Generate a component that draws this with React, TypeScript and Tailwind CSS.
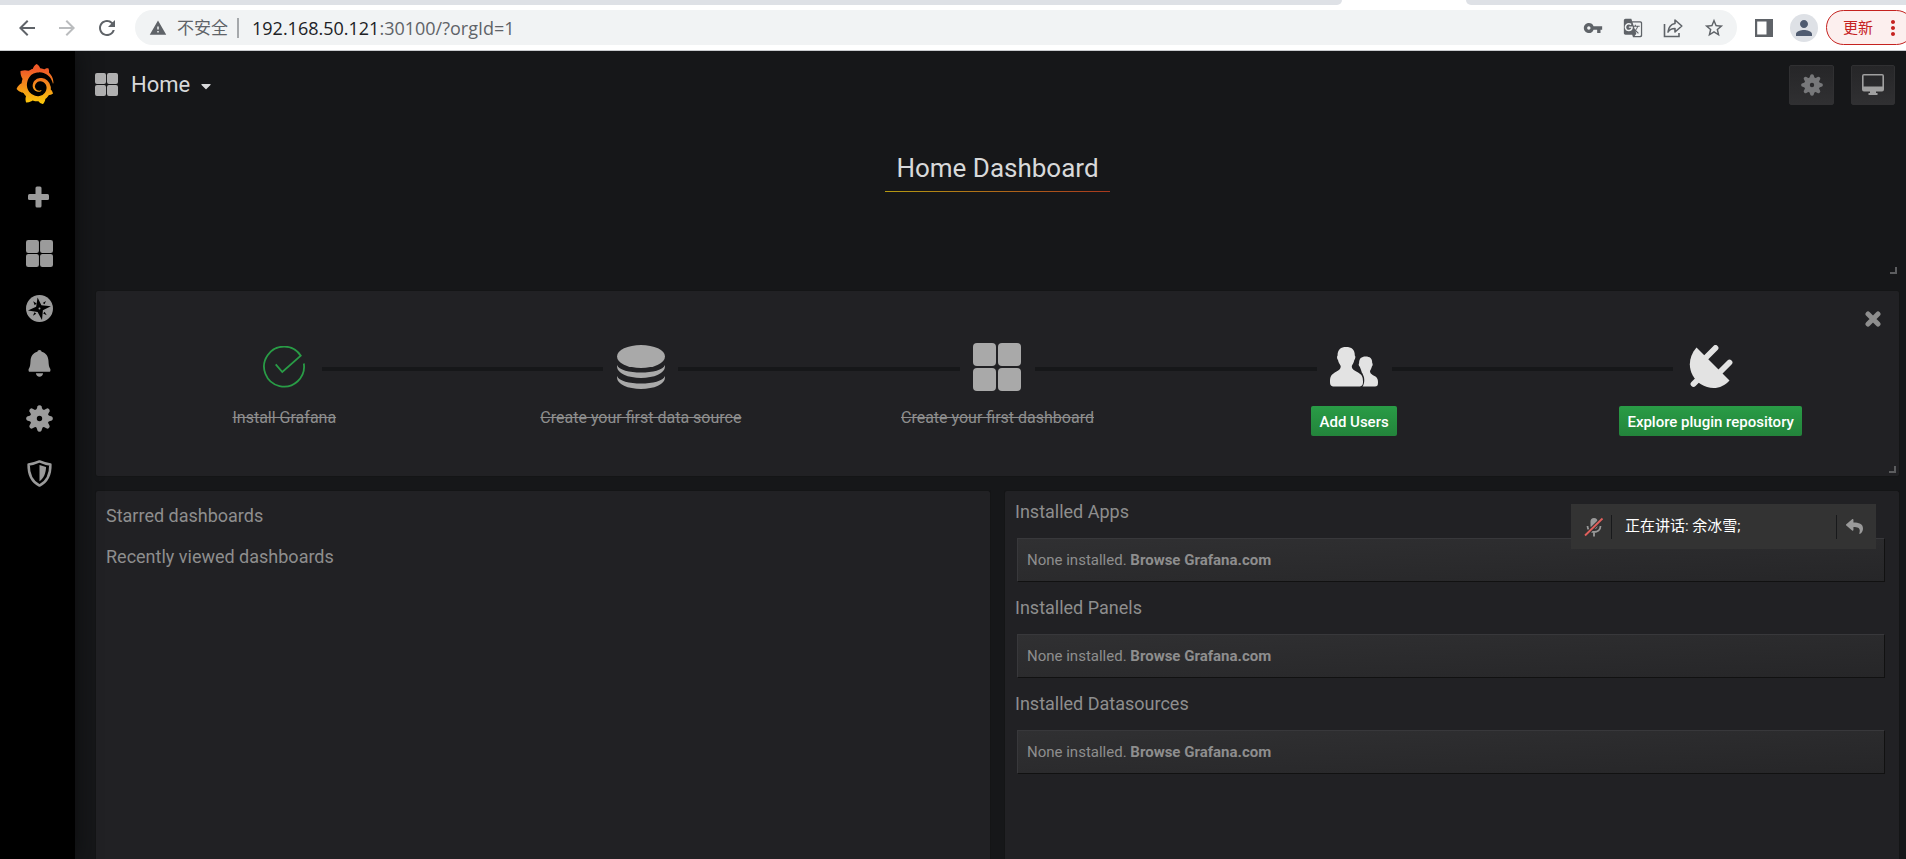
import type { ReactNode } from 'react';
import { SiGrafana } from 'react-icons/si';
import { FaReply, FaCaretDown } from 'react-icons/fa';
import { MdArrowBack, MdArrowForward, MdRefresh, MdWarning, MdVpnKey, MdStarBorder, MdPerson, MdGTranslate, MdMoreVert } from 'react-icons/md';

const PlusIcon = ({ className }: { className: string }) => (
  <svg viewBox="0 0 27 27" className={className} fill="currentColor" aria-hidden="true">
    <rect x="2" y="9" width="21" height="6" rx="1.500" />
    <rect x="9.500" y="1.500" width="6" height="21" rx="1.500" />
  </svg>
);

const GridIcon = ({ className }: { className: string }) => (
  <svg viewBox="0 0 48 48" className={className} fill="currentColor" aria-hidden="true">
    <rect x="0" y="0" width="23" height="23" rx="4" />
    <rect x="25" y="0" width="23" height="23" rx="4" />
    <rect x="0" y="25" width="23" height="23" rx="4" />
    <rect x="25" y="25" width="23" height="23" rx="4" />
  </svg>
);

const GearIcon = ({ className }: { className: string }) => (
  <svg viewBox="0 0 28 28" className={className} aria-hidden="true">
    <g fill="currentColor">
      {[0, 45, 90, 135, 180, 225, 270, 315].map((a) => (
        <path key={a} d="M10.6 5.5 L12 1.2 Q12.4 0.2 14 0.2 Q15.6 0.2 16 1.2 L17.4 5.5 Z" transform={`rotate(${a} 14 14)`} />
      ))}
      <path fillRule="evenodd" d="M14 4a10 10 0 1 0 0 20a10 10 0 1 0 0-20ZM14 11.2a2.8 2.8 0 1 1 0 5.6a2.8 2.8 0 1 1 0-5.6Z" />
    </g>
  </svg>
);

const CompassIcon = ({ className }: { className: string }) => (
  <svg viewBox="0 0 28 28" className={className} aria-hidden="true">
    <circle cx="14" cy="14" r="14" fill="currentColor" />
    <g fill="#000">
      <path d="M12 2.5 L16 10.6 L25.8 11.7 L17.500 15.900 L16.6 25.800 L12 17.500 L2 16.2 L10.500 12.100 Z" />
      <path d="M7.5 6.5 L11 8.7 L9 10.7 Z M20.7 6.2 L19.2 9.7 L17.4 8.2 Z M21.5 21 L17.8 19.2 L19.3 17.3 Z M7.2 21.5 L8.8 17.8 L10.6 19.4 Z" />
    </g>
    <circle cx="14" cy="14" r="1" fill="currentColor" />
  </svg>
);

const BellIcon = ({ className }: { className: string }) => (
  <svg viewBox="0 0 28 28" className={className} fill="currentColor" aria-hidden="true">
    <path d="M14 0c1.3 0 2 .8 2.2 1.9 4.600 1.200 6.900 5 7.100 9.300.2 4 .5 6.300 1.500 7.800.6.8.7 1.500.5 2.400-.1.800-.5 1.100-1.200 1.100H3.900c-.7 0-1.100-.3-1.200-1.100-.2-.9-.1-1.600.5-2.400 1-1.500 1.300-3.800 1.500-7.800.2-4.300 2.500-8.100 7.100-9.300C12 .8 12.700 0 14 0Z" />
    <path d="M10.300 24.200h7.400c-.3 2.200-1.600 3.600-3.700 3.600s-3.400-1.400-3.700-3.600Z" />
  </svg>
);

const ShieldIcon = ({ className }: { className: string }) => (
  <svg viewBox="0 0 28 28" className={className} aria-hidden="true">
    <path d="M14 1.500C10.800 3 6.500 4.200 2.700 4.600 2.500 15 6.300 22.600 14 26.500 21.700 22.600 25.500 15 25.300 4.600 21.500 4.200 17.200 3 14 1.500Z" fill="none" stroke="currentColor" strokeWidth="2.600" strokeLinejoin="round" />
    <path d="M14 5.200 20.800 7.200C20.600 13.500 18.600 18.800 14 22Z" fill="currentColor" />
  </svg>
);

const MonitorIcon = () => (
  <svg viewBox="0 0 22 22" className="size-[22px]" fill="currentColor" aria-hidden="true">
    <path fillRule="evenodd" d="M2 0H20Q22 0 22 2V15.500Q22 17.500 20 17.500H14V19H15.500V21H6.500V19H8V17.500H2Q0 17.500 0 15.500V2Q0 0 2 0ZM1.600 1.600V12.500H20.400V1.600Z" />
  </svg>
);

const CheckIcon = () => (
  <svg viewBox="0 0 42 42" className="size-[42px] text-[#299c46]" fill="none" stroke="currentColor" strokeWidth="1.800" aria-hidden="true">
    <path d="M12.700 18.300 19.300 26 37.800 9.700A20 20 0 1 0 40.800 17.500" />
  </svg>
);

const DatabaseIcon = () => (
  <svg viewBox="0 0 48 44" className="h-11 w-12" fill="currentColor" aria-hidden="true">
    <ellipse cx="24" cy="11.500" rx="24" ry="11.500" />
    <path d="M0 20C3 30 45 30 48 20V21.500A24 11.500 0 0 1 0 21.500Z" />
    <path d="M0 31C3 41 45 41 48 31V32.500A24 11.500 0 0 1 0 32.500Z" />
  </svg>
);

const UsersIcon = () => (
  <svg viewBox="0 0 48 40" className="h-10 w-12" fill="currentColor" aria-hidden="true">
    <path d="M16 0C21.500 0 25 2.500 24.800 8.500 25.700 9 25.500 12 24.300 13 23.800 16 22.500 17.500 21.800 19 21.500 23 26 24 29.500 26.500 32.500 28.500 33 31 33 35 33 38.500 31.500 39.500 29 39.500H4C1.500 39.500 0 38.500 0 35 0 31 .5 28.500 3.500 26.500 7 24 11 23 10.700 19 10 17.500 8.500 16 8 13 6.800 12 6.800 9 7.600 8.500 7.400 2.500 11 0 16 0Z" />
    <path d="M35.500 9.500C40 9.500 42.300 11.500 42.200 16 43 16.500 42.800 19 41.900 19.600 41.300 22 40.500 23 40 24 40 27 43 28 45.500 29.500 47.700 31 48 33 48 35.500 48 38.500 47 39.500 45 39.500H32.500C34.700 37 34.800 31 33.200 28.200 32.800 27 32.300 26 31.800 25.500 31.500 24 30.500 22 29.800 19.800 28.700 19 28.300 17 29.100 16.300 29 11.500 31.500 9.500 35.500 9.500Z" />
  </svg>
);

const PlugIcon = () => (
  <svg viewBox="0 0 44 44" className="size-11" aria-hidden="true">
    <path d="M7.500 2.500 40.500 35.500C33 44 22 45.500 11.500 39 0 31-3.500 15 7.500 2.500Z" fill="currentColor" />
    <g stroke="currentColor" strokeWidth="5.800" strokeLinecap="round">
      <path d="M17 12.500 26.500 3M31 27 40.500 17.500M9 34.500 4.500 39" />
    </g>
  </svg>
);

const CloseIcon = () => (
  <svg viewBox="0 0 16 16" className="size-4" stroke="currentColor" strokeWidth="5" strokeLinecap="round" aria-hidden="true">
    <path d="M3 3 13 13M13 3 3 13" />
  </svg>
);

const ShareIcon = () => (
  <svg viewBox="0 0 20 20" className="size-5" fill="none" stroke="currentColor" strokeWidth="1.600" aria-hidden="true">
    <path d="M1.500 6V18.500H16V15" />
    <path d="M12 2 18.800 8 12 14V10.500C8.500 10.500 6.500 11.500 5 14 5.500 9.500 8 6.200 12 5.500Z" strokeLinejoin="round" />
  </svg>
);

const SidePanelIcon = () => (
  <svg viewBox="0 0 18 18" className="size-[18px]" aria-hidden="true">
    <path fillRule="evenodd" fill="currentColor" d="M0 0H18V18H0ZM2.200 2.500V15.500H11.500V2.500Z" />
  </svg>
);

const MutedMicIcon = () => (
  <svg viewBox="0 0 20 20" className="size-5" aria-hidden="true">
    <rect x="6.500" y="1" width="7" height="11" rx="3.500" fill="#999" />
    <path d="M3.500 9C3.500 17 16.500 17 16.500 9M10 15V19.500" fill="none" stroke="#999" strokeWidth="1.800" />
    <path d="M1 18.500 18.500 1.500" stroke="#333" strokeWidth="4" />
    <path d="M1 18.500 18.500 1.500" stroke="#e0605c" strokeWidth="1.800" />
  </svg>
);

const ResizeHandle = () => (
  <span className="absolute right-[3px] bottom-[3px] size-[7px] border-r-2 border-b-2 border-[#5c5d5f]" />
);

function BrowserBar() {
  return (
    <div className="shrink-0 border-b border-[#c9cbce] bg-white font-['Open_Sans','Noto_Sans_CJK_SC',sans-serif] text-[#5f6368]">
      <div className="flex h-[5px]">
        <div className="flex-1 rounded-br-lg bg-[#dee1e6]" />
        <div className="w-[124px]" />
        <div className="w-[440px] rounded-bl-lg bg-[#dee1e6]" />
      </div>
      <div className="flex h-[45px] items-center overflow-hidden pl-[15px]">
        <button aria-label="后退" className="mr-4"><MdArrowBack className="size-6" /></button>
        <button aria-label="前进" className="mr-4 text-[#babcbe]"><MdArrowForward className="size-6" /></button>
        <button aria-label="刷新" className="mr-4"><MdRefresh className="size-6" /></button>
        <div className="flex h-[35px] min-w-0 flex-1 items-center rounded-full bg-[#f1f3f4] pr-3 pl-[14px]">
          <MdWarning className="size-[18px]" />
          <span className="ml-[10px] text-[17px] leading-6">不安全</span>
          <span className="mx-[9px] h-5 w-[2px] bg-[#a5a8ab]" />
          <span className="ml-1 text-lg leading-6 whitespace-nowrap"><span className="text-[#202124]">192.168.50.121</span>:30100/?orgId=1</span>
          <div className="ml-auto flex items-center gap-5">
            <button aria-label="密码"><MdVpnKey className="size-5" /></button>
            <button aria-label="翻译"><MdGTranslate className="size-5" /></button>
            <button aria-label="分享"><ShareIcon /></button>
            <button aria-label="收藏"><MdStarBorder className="size-[22px]" /></button>
          </div>
        </div>
        <button aria-label="侧边栏" className="ml-[18px]"><SidePanelIcon /></button>
        <button aria-label="用户" className="ml-[17px] flex size-7 items-center justify-center rounded-full bg-[#dee1e6] text-[#4f5b70]"><MdPerson className="size-6" /></button>
        <button className="-mr-2 ml-2 flex h-[35px] items-center rounded-full border border-[#c5221f] bg-[#fcefee] pr-2 pl-4 text-[15px] whitespace-nowrap text-[#c5221f]">
          更新<MdMoreVert className="ml-2 size-6" />
        </button>
      </div>
    </div>
  );
}

const navItems = [
  { label: 'Create', icon: <PlusIcon className="size-[27px]" /> },
  { label: 'Dashboards', icon: <GridIcon className="size-[27px]" /> },
  { label: 'Explore', icon: <CompassIcon className="size-[27px]" /> },
  { label: 'Alerting', icon: <BellIcon className="size-[27px]" /> },
  { label: 'Configuration', icon: <GearIcon className="size-[27px]" /> },
  { label: 'Server Admin', icon: <ShieldIcon className="size-[27px]" /> },
];

function Sidebar() {
  return (
    <nav className="z-10 flex w-[75px] shrink-0 flex-col items-center bg-black text-[#9b9b9b] shadow-[0_0_20px_#0b0c0e]">
      <svg className="absolute size-0" aria-hidden="true">
        <linearGradient id="flame" x1="0" y1="0" x2="0" y2="1">
          <stop offset="0.150" stopColor="#f05a28" />
          <stop offset="1" stopColor="#fbca0a" />
        </linearGradient>
      </svg>
      <a href="#home" aria-label="Grafana" className="mt-[13px] mr-[5px] mb-[67px]"><SiGrafana fill="url(#flame)" className="size-10" /></a>
      {navItems.map((n) => (
        <a key={n.label} href="#nav" aria-label={n.label} className="flex h-[55px] items-center pl-1">{n.icon}</a>
      ))}
    </nav>
  );
}

const iconButton = 'flex h-10 items-center justify-center rounded-[2px] border border-[#303032] bg-linear-to-b from-[#262628] to-[#303032]';

function Step({ icon, first, last, children }: { icon: ReactNode; first?: boolean; last?: boolean; children: ReactNode }) {
  return (
    <li className="flex flex-1 flex-col items-center">
      <div className="flex h-12 w-full items-center">
        <span className={first ? 'flex-1' : 'mt-1 h-1 flex-1 bg-[#161719]'} />
        <span className="flex w-[75px] justify-center">{icon}</span>
        <span className={last ? 'flex-1' : 'mt-1 h-1 flex-1 bg-[#161719]'} />
      </div>
      {children}
    </li>
  );
}

const doneText = 'mt-[15px] text-base leading-6 text-[#8e8e8e] line-through';
const ctaButton = 'mt-[15px] h-[30px] rounded-[2px] bg-linear-to-b from-[#299c46] to-[#23843b] px-2 pt-[2px] text-[15px] font-medium text-white';
const panel = 'relative rounded-[3px] border border-[#141516] bg-[#212124]';

const plugins = ['Installed Apps', 'Installed Panels', 'Installed Datasources'];

export default function App() {
  return (
    <div className="flex h-screen flex-col overflow-hidden bg-[#161719]">
      <BrowserBar />
      <div className="flex min-h-0 flex-1 overflow-hidden font-[Roboto,'Noto_Sans_CJK_SC',sans-serif] text-[#d8d9da]">
        <Sidebar />
        <main className="flex min-w-0 flex-1 flex-col">
          <header className="flex items-center pt-[14px] pr-[11px] pl-5">
            <GridIcon className="mb-[2px] size-[23px] text-[#b0b0b0]" />
            <button className="ml-[13px] flex h-10 items-center pb-[2px] text-[22px]">
              Home<FaCaretDown className="mt-1 ml-2 size-4" />
            </button>
            <button aria-label="Settings" className={iconButton + ' ml-auto w-[45px] text-[#77787a]'}><GearIcon className="size-[22px]" /></button>
            <button aria-label="Cycle view mode" className={iconButton + ' ml-[17px] w-11 text-[#a0a0a0]'}><MonitorIcon /></button>
          </header>

          <div className="flex min-h-0 flex-1 flex-col gap-[13px] pr-[6px] pl-5">
            <section className="relative flex h-[172px] shrink-0 justify-center pt-[45px]">
              <h1 className="h-[42px] border-b border-transparent px-[11px] text-[26px] leading-9 [border-image:linear-gradient(to_right,#b59b12,#a8381e)_1]">Home Dashboard</h1>
              <ResizeHandle />
            </section>

            <section className={panel + ' h-[187px] shrink-0 px-[10px] pt-[52px]'}>
              <button aria-label="Close" className="absolute top-5 right-[18px] text-[#8e8e8e]"><CloseIcon /></button>
              <ol className="flex text-[#a9a9a9]">
                <Step first icon={<CheckIcon />}><span className={doneText}>Install Grafana</span></Step>
                <Step icon={<DatabaseIcon />}><span className={doneText}>Create your first data source</span></Step>
                <Step icon={<GridIcon className="size-12" />}><span className={doneText}>Create your first dashboard</span></Step>
                <Step icon={<span className="text-[#e3e3e3]"><UsersIcon /></span>}><button className={ctaButton}>Add Users</button></Step>
                <Step last icon={<span className="text-[#e3e3e3]"><PlugIcon /></span>}><button className={ctaButton}>Explore plugin repository</button></Step>
              </ol>
              <ResizeHandle />
            </section>

            <div className="grid min-h-0 flex-1 grid-cols-2 gap-[13px] text-[#8e8e8e]">
              <section className={panel + ' rounded-b-none border-b-0 px-[10px] pt-[13px]'}>
                <h2 className="text-lg leading-6">Starred dashboards</h2>
                <h2 className="mt-[17px] text-lg leading-6">Recently viewed dashboards</h2>
              </section>
              <section className={panel + ' rounded-b-none border-b-0 pt-[9px] pr-[15px] pl-[10px]'}>
                {plugins.map((p) => (
                  <div key={p} className="mb-[15px]">
                    <h2 className="text-lg leading-6">{p}</h2>
                    <div className="mt-[14px] ml-[2px] h-[43px] border-t border-l border-[#38383b] bg-linear-to-br from-[#303032] to-[#262628] pl-[9px] text-[15px] leading-[42px] shadow-[1px_1px_0_#111]">
                      None installed. <a href="#plugins" className="font-bold">Browse Grafana.com</a>
                    </div>
                  </div>
                ))}
                <div className="absolute top-[13px] right-[23px] flex h-[45px] w-[305px] items-center bg-[#333] px-[13px] text-white">
                  <MutedMicIcon />
                  <span className="ml-[7px] h-6 w-px bg-[#18191b]" />
                  <span className="ml-[13px] text-[15px]">正在讲话: 余冰雪;</span>
                  <span className="mr-[9px] ml-auto h-6 w-px bg-[#18191b]" />
                  <button aria-label="返回" className="text-[#9a9a9a]"><FaReply className="size-[17px]" /></button>
                </div>
              </section>
            </div>
          </div>
        </main>
      </div>
    </div>
  );
}
